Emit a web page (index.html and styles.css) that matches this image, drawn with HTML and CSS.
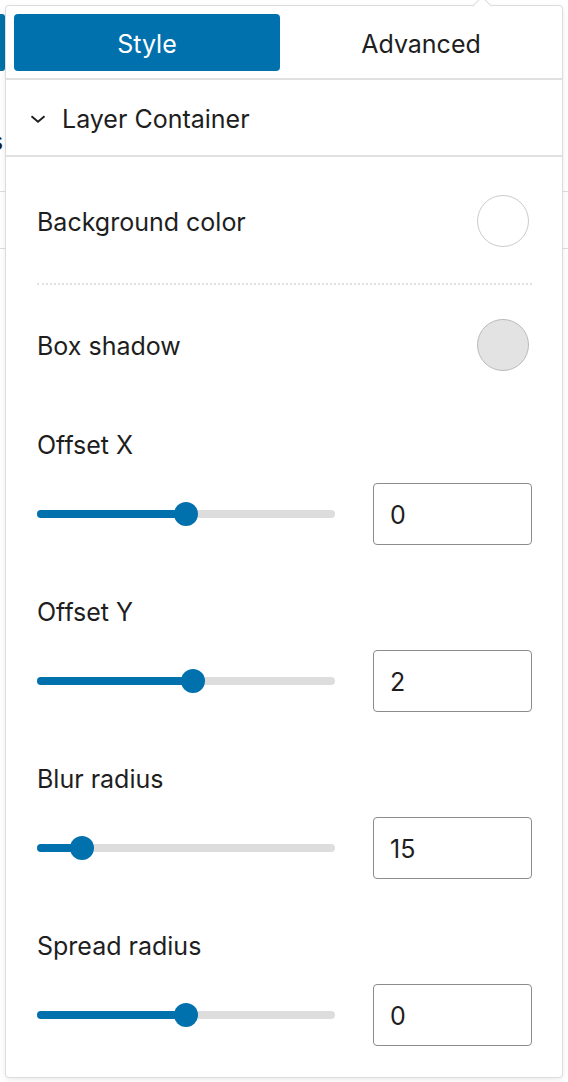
FILE: index.html
```html
<!DOCTYPE html>
<html lang="en">
<head>
<meta charset="utf-8">
<title>Layer Container</title>
<link rel="stylesheet" href="styles.css">
</head>
<body>
<div class="backdrop">
  <div class="bd-tab"></div>
  <div class="bd-letter">s</div>
  <div class="bd-line bd-line-1"></div>
  <div class="bd-line bd-line-2"></div>
</div>

<div class="popover">
  <div class="arrow"></div>
  <div class="tabs">
    <button class="tab tab-active">Style</button>
    <button class="tab">Advanced</button>
  </div>
  <div class="panel-header">
    <svg class="chevron" width="24" height="24" viewBox="0 0 24 24"><path d="M5.5 9.2l6.5 5.6 6.5-5.6" fill="none" stroke="#1e1e1e" stroke-width="1.9"/></svg>
    <span>Layer Container</span>
  </div>
  <div class="panel-body">
    <div class="color-row">
      <span class="label">Background color</span>
      <span class="swatch swatch-empty"></span>
    </div>
    <div class="dotted"></div>
    <div class="color-row">
      <span class="label">Box shadow</span>
      <span class="swatch swatch-grey"></span>
    </div>

    <div class="range-group first">
      <div class="label">Offset X</div>
      <div class="range-row">
        <div class="track"><div class="fill" style="width:50%"></div><div class="thumb" style="left:50%"></div></div>
        <div class="num">0</div>
      </div>
    </div>
    <div class="range-group">
      <div class="label">Offset Y</div>
      <div class="range-row">
        <div class="track"><div class="fill" style="width:52.4%"></div><div class="thumb" style="left:52.4%"></div></div>
        <div class="num">2</div>
      </div>
    </div>
    <div class="range-group">
      <div class="label">Blur radius</div>
      <div class="range-row">
        <div class="track"><div class="fill" style="width:15.1%"></div><div class="thumb" style="left:15.1%"></div></div>
        <div class="num">15</div>
      </div>
    </div>
    <div class="range-group">
      <div class="label">Spread radius</div>
      <div class="range-row">
        <div class="track"><div class="fill" style="width:50%"></div><div class="thumb" style="left:50%"></div></div>
        <div class="num">0</div>
      </div>
    </div>
  </div>
</div>
</body>
</html>
```

FILE: styles.css
```css
* { box-sizing: border-box; }
html, body {
  margin: 0;
  padding: 0;
  background: #fff;
  width: 568px;
  height: 1082px;
  overflow: hidden;
  font-family: Inter, "Noto Sans", "Liberation Sans", sans-serif;
  color: #1e1e1e;
}

.backdrop { position: relative; width: 568px; height: 1082px; }
.bd-tab {
  position: absolute; left: 0; top: 14px; width: 5px; height: 57px;
  background: #0071a8; border-radius: 0 3px 3px 0;
}
.bd-letter {
  position: absolute; left: -10px; top: 126px; font-size: 25px; color: #1e1e1e;
}
.bd-line { position: absolute; left: 0; right: 0; height: 1px; background: #ddd; }
.bd-line-1 { top: 191px; }
.bd-line-2 { top: 248px; }

.popover {
  position: absolute;
  left: 5px;
  top: 5px;
  width: 558px;
  height: 1073px;
  background: #fff;
  border: 1px solid #dcdcdc;
  border-radius: 4px;
  box-shadow: 0 2px 6px rgba(0, 0, 0, 0.08);
}
.arrow {
  position: absolute;
  top: -7px;
  left: 469px;
  width: 14px;
  height: 14px;
  background: #fff;
  border-left: 1px solid #dcdcdc;
  border-top: 1px solid #dcdcdc;
  transform: rotate(45deg);
}

.tabs {
  display: grid;
  grid-template-columns: 266px 1fr;
  gap: 8px;
  padding: 8px 8px 7px 8px;
  border-bottom: 2px solid #e0e0e0;
  position: relative;
}
.tab {
  height: 57px;
  border: 0;
  border-radius: 4px;
  background: transparent;
  font-family: inherit;
  font-size: 25px;
  color: #1e1e1e;
  padding: 2px 0 0 0;
}
.tab-active { background: #0071ad; color: #fff; }

.panel-header {
  display: flex;
  align-items: center;
  height: 77px;
  padding: 3px 0 0 20px;
  gap: 12px;
  font-size: 25px;
  border-bottom: 2px solid #e0e0e0;
}
.chevron { display: block; }

.panel-body { padding: 38px 30px 0 31px; }

.label { font-size: 25px; line-height: 30px; }

.color-row {
  display: flex;
  align-items: center;
  justify-content: space-between;
  height: 52px;
}
.color-row .label { padding-top: 2px; }
.swatch {
  width: 52px;
  height: 52px;
  border-radius: 50%;
  margin-right: 3px;
}
.swatch-empty { border: 1.5px solid #ccc; background: #fff; }
.swatch-grey { border: 1.5px solid #bbb; background: #e3e3e3; }

.dotted {
  border-top: 2px dotted #e2e2e2;
  margin: 36px 0 34px 0;
}

.range-group { margin-top: 52px; }
.range-group.first { margin-top: 59px; }

.range-row {
  display: flex;
  align-items: center;
  justify-content: space-between;
  margin-top: 23px;
}
.track {
  position: relative;
  width: 298px;
  height: 8px;
  border-radius: 4px;
  background: #dddddd;
}
.fill {
  position: absolute; left: 0; top: 0; bottom: 0;
  background: #0071ad;
  border-radius: 4px;
}
.thumb {
  position: absolute;
  top: 50%;
  width: 24px;
  height: 24px;
  margin: -12px 0 0 -12px;
  border-radius: 50%;
  background: #0071ad;
}
.num {
  width: 159px;
  height: 62px;
  border: 1.5px solid #8c8c8c;
  border-radius: 4px;
  padding: 2px 0 0 16px;
  display: flex;
  align-items: center;
  font-size: 25px;
}
```
